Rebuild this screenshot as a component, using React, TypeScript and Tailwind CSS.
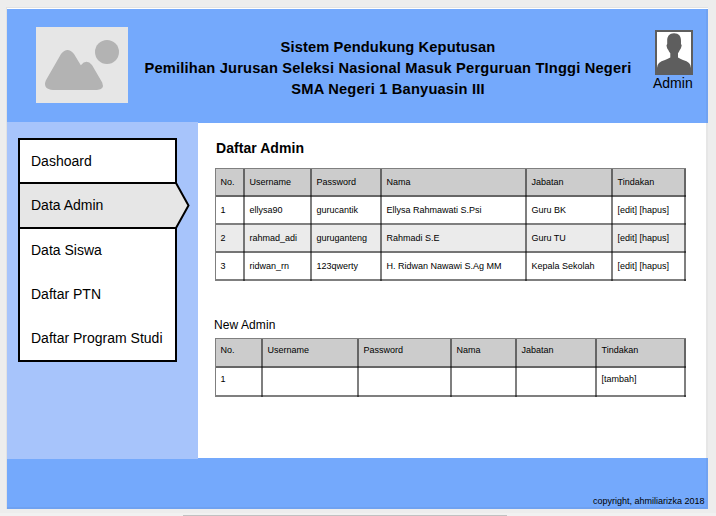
const menu = [
  { label: 'Dashoard', box: 'h-[42px]', top: 'pt-[12px]' },
  { label: 'Data Admin', box: 'h-[47px]', top: 'pt-[12px]', active: true },
  { label: 'Data Siswa', box: 'h-[43px]', top: 'pt-[12px]' },
  { label: 'Daftar PTN', box: 'h-[44px]', top: 'pt-[13px]' },
  { label: 'Daftar Program Studi', box: 'h-[44px]', top: 'pt-[13px]' },
];

const admins = [
  ['No.', 'Username', 'Password', 'Nama', 'Jabatan', 'Tindakan'],
  ['1', 'ellysa90', 'gurucantik', 'Ellysa Rahmawati S.Psi', 'Guru BK', '[edit] [hapus]'],
  ['2', 'rahmad_adi', 'guruganteng', 'Rahmadi S.E', 'Guru TU', '[edit] [hapus]'],
  ['3', 'ridwan_rn', '123qwerty', 'H. Ridwan Nawawi S.Ag MM', 'Kepala Sekolah', '[edit] [hapus]'],
];

const newAdmin = [
  ['No.', 'Username', 'Password', 'Nama', 'Jabatan', 'Tindakan'],
  ['1', '', '', '', '', '[tambah]'],
];

function Table({ rows, grid, pad }: { rows: string[][]; grid: string; pad: string }) {
  return (
    <div className={`grid w-[471px] border-t border-l border-[#7f7f7f] ${grid}`}>
      {rows.map((row, r) =>
        row.map((text, c) => (
          <div
            key={`${r}-${c}`}
            className={`relative border-r-2 border-b-2 border-black/50 pl-[4.5px] text-[9px] leading-[12px] whitespace-nowrap after:absolute after:-right-[2px] after:-bottom-[2px] after:size-[2px] after:bg-black/50 ${pad} ${
              r === 0 ? 'bg-[#cccccc]' : r === 2 ? 'bg-[#ebebeb]' : 'bg-white'
            }`}
          >
            {text}
          </div>
        )),
      )}
    </div>
  );
}

export default function App() {
  return (
    <div className="flex h-[516px] w-[716px] flex-col overflow-hidden bg-[#ededed] pt-[7px] font-['Liberation_Sans',Arial,sans-serif] text-black">
      <div className="ml-[6px] flex h-[502px] w-[702px] flex-col border-t border-l border-[#e2e2e2] bg-white pt-px">
        <header className="flex h-[114px] shrink-0 border-r-2 border-[#70a2f1] bg-[#74a9fc]">
          <svg className="mt-[18px] ml-[29px] h-[76px] w-[92px] shrink-0" viewBox="0 0 92 76">
            <rect width="92" height="76" fill="#e6e6e6" />
            <g fill="#b3b3b3">
              <circle cx="71" cy="25" r="12" />
              <path d="M9.8 53.5 L25 27 Q31.5 19 38 27 L44.8 38.3 Q50.5 31.5 56 38 L66.2 55.5 Q69 62.5 61 63 H17 Q6.5 62 9.8 53.5Z" />
            </g>
          </svg>
          <div className="ml-[10px] w-[500px] shrink-0 pt-[28px] text-center text-[14.67px] leading-[21px] font-bold whitespace-nowrap">
            <p className="tracking-[0.12px]">Sistem Pendukung Keputusan</p>
            <p className="tracking-[0.19px]">Pemilihan Jurusan Seleksi Nasional Masuk Perguruan TInggi Negeri</p>
            <p className="tracking-[0.19px]">SMA Negeri 1 Banyuasin III</p>
          </div>
          <div className="ml-[8px] w-[50px] shrink-0 pt-[21px]">
            <svg className="ml-[9px] h-[45px] w-[38px]" viewBox="0 0 38 45">
              <rect x="1" y="1" width="36" height="43" fill="white" stroke="#5e5e5e" strokeWidth="2" />
              <path
                d="M19 3.2 C23.8 3.2 26.2 6.2 26 11 L26 14 Q27.2 14.8 26.3 17 Q25.8 19 24.8 20 Q24 22 23 23.2 V27.6 Q25 29 28 30 Q36 32 36 38 V44 H2 V38 Q2 32 10 30 Q13 29 15.3 27.6 V23.2 Q14 22 13.3 20 Q12.2 19 11.8 17 Q11 14.8 12.2 14 V11 C12 6.2 14.5 3.2 19 3.2Z"
                fill="#5e5e5e"
              />
            </svg>
            <p className="ml-[7px] text-[14px] leading-[16px] whitespace-nowrap">Admin</p>
          </div>
        </header>

        <div className="flex h-[335px] shrink-0 border-r-2 border-[#e6e6e6]">
          <aside className="z-10 -mt-px h-[337px] w-[191px] shrink-0 bg-[#a7c4fb] pt-[16px] pl-[11px]">
            <nav className="h-[224px] w-[159px] border-2 border-black bg-white text-[14px] leading-[18px]">
              {menu.map((item) => (
                <div
                  key={item.label}
                  className={`relative pl-[11px] whitespace-nowrap ${item.box} ${item.top} ${
                    item.active ? 'border-y-2 border-black bg-[#e6e6e6]' : ''
                  }`}
                >
                  {item.label}
                  {item.active && (
                    <svg className="absolute -top-[2px] left-[154px] h-[47px] w-[16px]" viewBox="0 0 16 47">
                      <path d="M0 1 H2 L14.5 23.5 L2 46 H0Z" fill="#e6e6e6" />
                      <path d="M0 1 H2 L14.5 23.5 L2 46 H0" fill="none" stroke="black" strokeWidth="2" />
                      <path d="M0 2V45" stroke="#e6e6e6" strokeWidth="2" />
                    </svg>
                  )}
                </div>
              ))}
            </nav>
          </aside>

          <main className="pl-[17px]">
            <h1 className="mt-[16px] ml-px text-[14px] leading-[18px] font-bold tracking-[0.05px]">Daftar Admin</h1>
            <div className="mt-[11px]">
              <Table rows={admins} grid="grid-cols-[29px_67px_70px_145px_86px_73px] auto-rows-[28px]" pad="pt-[7px]" />
            </div>
            <h2 className="mt-[36px] -ml-px text-[12px] leading-[16px] tracking-[0.08px]">New Admin</h2>
            <div className="mt-[5px]">
              <Table rows={newAdmin} grid="grid-cols-[47px_96px_93px_65px_80px_89px] auto-rows-[29px]" pad="pt-[5px]" />
            </div>
          </main>
        </div>

        <footer className="flex h-[51px] shrink-0 items-end justify-end border-r-2 border-b-2 border-[#70a2f1] bg-[#74a9fc] pr-[1.5px] text-[9px] leading-[12px]">
          copyright, ahmiliarizka 2018
        </footer>
      </div>
      <div className="mt-[4px] h-[3px] shrink-0 bg-[#f1f1f1] pt-[2px]">
        <div className="ml-[183px] h-px w-[324px] bg-[#c1c1c1]" />
      </div>
    </div>
  );
}
